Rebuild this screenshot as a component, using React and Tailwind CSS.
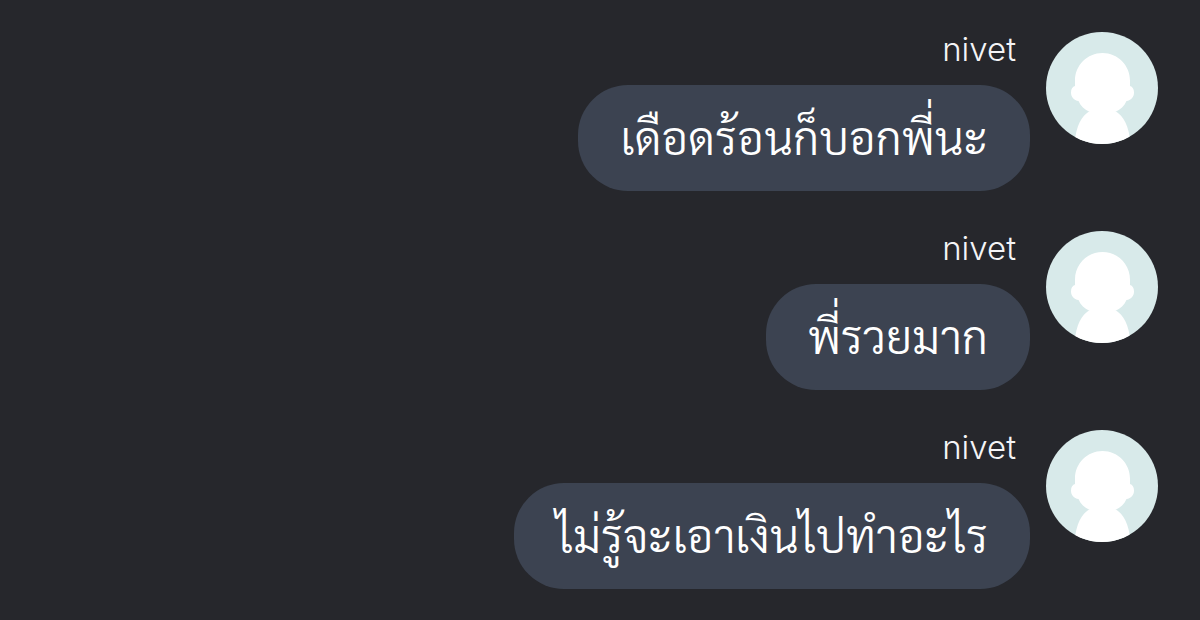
import React from 'react';

const messages = [
  { id: 1, name: 'nivet', text: 'เดือดร้อนก็บอกพี่นะ' },
  { id: 2, name: 'nivet', text: 'พี่รวยมาก' },
  { id: 3, name: 'nivet', text: 'ไม่รู้จะเอาเงินไปทำอะไร' },
];

function Avatar() {
  return (
    <svg viewBox="0 0 112 112" className="h-28 w-28 shrink-0 rounded-full" aria-hidden="true">
      <rect width="112" height="112" fill="#d8eaea" />
      {/* head and ears */}
      <path
        d="M56.5 21C41.300 21 29 33.300 29 48.500V54c-2.500.8-4 3-4 6.500 0 4.500 3 8 7.500 8.500 2 5 6 8.500 11.500 11 7 3.500 18 3.500 25 0C74.500 77.500 78.500 74 80.500 69c4.500-.5 7.500-4 7.500-8.500 0-3.500-1.500-5.700-4-6.500v-5.500C84 33.300 71.700 21 56.500 21z"
        fill="#fff"
      />
      {/* shoulders */}
      <path d="M43 79.500C36 84 30 93 28.500 112h56C83 93 77 84 70 79.500z" fill="#fff" />
    </svg>
  );
}

function Message({ message }) {
  return (
    <li className="flex items-start justify-end gap-4">
      <div className="flex flex-col items-end">
        <span className="mr-3.5 h-[53px] text-[33px] leading-[34px] text-[#f4f4f6]">{message.name}</span>
        <p className="rounded-[50px] bg-[#3c4351] px-[42px] pt-[18px] pb-[22px] font-['Sarabun','Noto_Sans_Thai_Looped',sans-serif] text-[46px] leading-[66px] text-white">
          {message.text}
        </p>
      </div>
      <Avatar />
    </li>
  );
}

export default function App() {
  return (
    <main className="min-h-screen bg-[#26272c] pt-8 pr-[42px] font-['Inter',sans-serif] font-light">
      <ul className="flex flex-col gap-10">
        {messages.map((message) => (
          <Message key={message.id} message={message} />
        ))}
      </ul>
    </main>
  );
}
